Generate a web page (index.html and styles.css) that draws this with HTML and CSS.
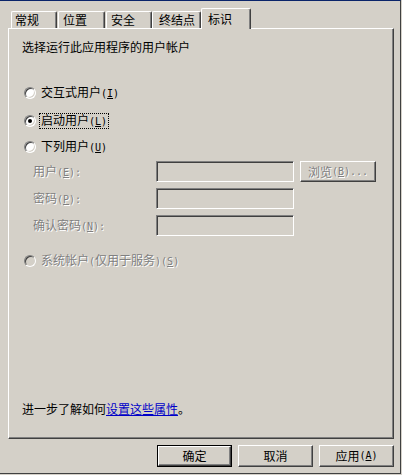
FILE: index.html
```html
<!DOCTYPE html>
<html lang="zh-CN">
<head>
<meta charset="utf-8">
<title>属性</title>
<link rel="stylesheet" href="styles.css">
</head>
<body>
<div class="window">
  <div class="tabs">
    <div class="tab t1">常规</div>
    <div class="tab t2">位置</div>
    <div class="tab t3">安全</div>
    <div class="tab t4">终结点</div>
    <div class="tab active">标识</div>
  </div>
  <div class="panel">
    <div class="heading">选择运行此应用程序的用户帐户</div>
    <div class="radio-row r1"><span class="radio"></span><span class="label">交互式用户<span class="a">(<u>I</u>)</span></span></div>
    <div class="radio-row r2"><span class="radio checked"></span><span class="label focus">启动用户<span class="a">(<u>L</u>)</span></span></div>
    <div class="radio-row r3"><span class="radio"></span><span class="label">下列用户<span class="a">(<u>U</u>)</span></span></div>
    <div class="fields">
      <div class="field-row">
        <span class="flabel">用户<span class="a">(<u>E</u>):</span></span>
        <span class="input"></span>
        <span class="btn small disabled">浏览<span class="a">(<u>B</u>)...</span></span>
      </div>
      <div class="field-row">
        <span class="flabel">密码<span class="a">(<u>P</u>):</span></span>
        <span class="input"></span>
      </div>
      <div class="field-row">
        <span class="flabel">确认密码<span class="a">(<u>N</u>):</span></span>
        <span class="input"></span>
      </div>
    </div>
    <div class="radio-row r4 disabled"><span class="radio off"></span><span class="label">系统帐户<span class="a">(</span>仅用于服务<span class="a">)(<u>S</u>)</span></span></div>
    <div class="learn">进一步了解如何<a href="#" class="link">设置这些属性</a>。</div>
  </div>
  <div class="buttons">
    <span class="btn default"><span class="btn-in">确定</span></span>
    <span class="btn">取消</span>
    <span class="btn">应用<span class="a">(<u>A</u>)</span></span>
  </div>
</div>
</body>
</html>
```

FILE: styles.css
```css
html, body {
  margin: 0;
  padding: 0;
  background: #d4d0c8;
}
body {
  font-family: "Noto Sans CJK SC", "Liberation Sans", sans-serif;
  font-size: 12px;
  color: #000;
  width: 402px;
  height: 475px;
  overflow: hidden;
}
u { text-decoration: underline; text-underline-offset: 1px; }

/* half-width latin segments, 6px per character like the bitmap UI font */
.a {
  font-family: "DejaVu Sans Mono", "Liberation Mono", monospace;
  font-size: 10px;
}

.window {
  width: 401px;
  height: 474px;
  box-sizing: border-box;
  border-top: 1px solid #0a246a;
  border-right: 1px solid #404040;
  border-bottom: 1px solid #404040;
  padding: 7px 0 0 8px;
}

/* tabs */
.tabs {
  display: flex;
  align-items: flex-end;
  height: 20px;
  padding-left: 3px;
}
.tab {
  box-sizing: border-box;
  height: 17px;
  line-height: 15px;
  border-left: 1px solid #fff;
  border-top: 1px solid #fff;
  border-right: 1px solid #404040;
  box-shadow: inset -1px 0 #808080;
  border-radius: 2px 2px 0 0;
  padding-left: 3px;
  white-space: nowrap;
}
.t1 { width: 46px; margin-right: 1px; }
.t2 { width: 47px; margin-right: 1px; padding-left: 4px; }
.t3 { width: 46px; padding-left: 4px; }
.t4 { width: 49px; padding-left: 6px; }
.tab.active {
  position: relative;
  z-index: 1;
  width: 50px;
  height: 21px;
  margin-bottom: -1px;
  line-height: 19px;
  padding-left: 6px;
  background: #d4d0c8;
  padding-bottom: 2px;
}

/* panel */
.panel {
  box-sizing: border-box;
  width: 386px;
  height: 411px;
  border-left: 1px solid #fff;
  border-top: 1px solid #fff;
  border-right: 1px solid #404040;
  border-bottom: 1px solid #404040;
  box-shadow: inset -1px -1px #808080;
  display: flex;
  flex-direction: column;
  padding: 11px 0 0 0;
}
.heading {
  height: 14px;
  line-height: 14px;
  padding-left: 13px;
}

.radio-row {
  display: flex;
  align-items: center;
  height: 14px;
  line-height: 14px;
  padding-left: 15px;
}
.r1 { margin-top: 32px; }
.r2 { margin-top: 14px; }
.r3 { margin-top: 12px; }
.r4 { margin-top: 18px; }

.radio {
  position: relative;
  box-sizing: border-box;
  width: 12px;
  height: 12px;
  border-radius: 50%;
  background: #fff;
  border: 1px solid;
  border-color: #808080 #fff #fff #808080;
  box-shadow: inset 1px 1px #404040, inset -1px -1px #d4d0c8;
  flex: none;
}
.radio.checked::after {
  content: "";
  position: absolute;
  left: 3px;
  top: 3px;
  width: 4px;
  height: 4px;
  border-radius: 50%;
  background: #000;
}
.radio.off { background: #d4d0c8; }

.label {
  margin-left: 3px;
  padding: 0 1px;
  border: 1px solid transparent;
  line-height: 12px;
  white-space: nowrap;
}
.label.focus { border: 1px dotted #000; }

.disabled, .flabel {
  color: #808080;
  text-shadow: 1px 1px 0 #fff;
}

/* fields */
.fields {
  display: flex;
  flex-direction: column;
  gap: 6px;
  margin-top: 7px;
}
.field-row {
  display: flex;
  align-items: center;
  height: 21px;
  padding-left: 24px;
}
.flabel {
  width: 123px;
  flex: none;
  line-height: 14px;
  white-space: nowrap;
}
.input {
  box-sizing: border-box;
  width: 138px;
  height: 21px;
  border: 1px solid;
  border-color: #808080 #fff #fff #808080;
  box-shadow: inset 1px 1px #404040, inset -1px -1px #d4d0c8;
  background: #d4d0c8;
  flex: none;
}

/* buttons */
.btn {
  box-sizing: border-box;
  display: flex;
  align-items: center;
  justify-content: center;
  width: 75px;
  height: 22px;
  border: 1px solid;
  border-color: #fff #404040 #404040 #fff;
  box-shadow: inset -1px -1px #808080;
  background: #d4d0c8;
  line-height: 14px;
  white-space: nowrap;
  flex: none;
}
.btn.small {
  width: 76px;
  height: 21px;
  margin-left: 6px;
}
.btn.default {
  border: 1px solid #000;
  box-shadow: none;
  padding: 0;
}
.btn-in {
  box-sizing: border-box;
  display: flex;
  align-items: center;
  justify-content: center;
  width: 100%;
  height: 100%;
  border: 1px solid;
  border-color: #fff #404040 #404040 #fff;
  box-shadow: inset -1px -1px #808080;
}

.learn {
  margin-top: auto;
  margin-bottom: 22px;
  padding-left: 13px;
  height: 14px;
  line-height: 14px;
}
.link {
  color: #0000c8;
  text-decoration: underline;
}

.buttons {
  display: flex;
  justify-content: flex-end;
  gap: 6px;
  width: 386px;
  margin-top: 6px;
}
```
